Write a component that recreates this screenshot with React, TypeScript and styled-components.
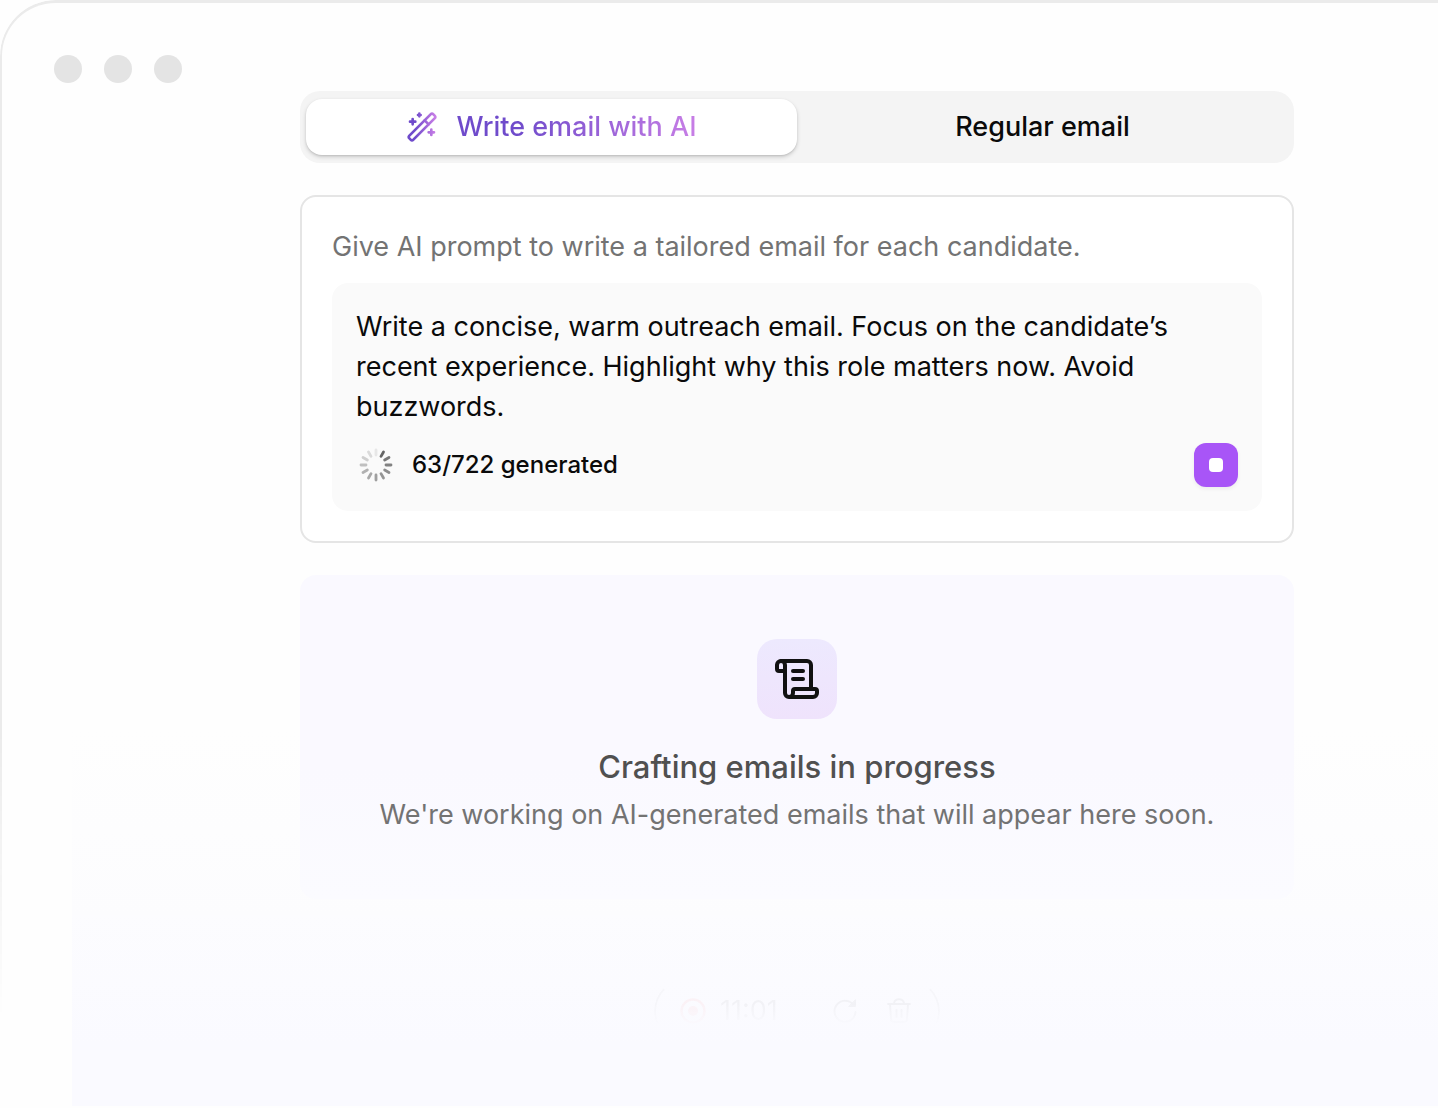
import React, { useState } from "react";
import styled, { createGlobalStyle } from "styled-components";
import { ScrollText } from "lucide-react";

const GlobalStyle = createGlobalStyle`
  *, *::before, *::after { box-sizing: border-box; }
  body {
    margin: 0;
    background: #fefefe;
    color: #0a0a0a;
    font-family: Inter, "Liberation Sans", Arial, sans-serif;
  }
  button, textarea { font: inherit; color: inherit; }
`;

const Window = styled.div`
  position: relative;
  isolation: isolate;
  min-height: 100vh;
  overflow: hidden;

  &::before {
    content: "";
    position: absolute;
    inset: 0;
    border-top: 3px solid #ebebeb;
    border-left: 2px solid #ebebeb;
    border-top-left-radius: 56px;
    mask-image: linear-gradient(#000 66%, transparent 92%);
    pointer-events: none;
  }
`;

const TitleBar = styled.header`
  display: flex;
  gap: 22px;
  padding: 55px 54px 8px;
`;

const Dot = styled.span`
  width: 28px;
  height: 28px;
  border-radius: 50%;
  background: #e4e4e4;
`;

const Content = styled.main`
  display: flex;
  flex-direction: column;
  gap: 32px;
  padding: 0 144px 0 300px;
`;

const Tabs = styled.div`
  display: grid;
  grid-template-columns: 1fr 1fr;
  padding: 8px 6px;
  border-radius: 20px;
  background: #f4f4f4;
`;

const Tab = styled.button<{ $active: boolean }>`
  display: flex;
  align-items: center;
  justify-content: center;
  gap: 18px;
  height: 56px;
  padding: 0;
  border: 0;
  border-radius: 16px;
  background: ${(p) => (p.$active ? "#fff" : "transparent")};
  box-shadow: ${(p) =>
    p.$active ? "0 2px 4px rgba(0,0,0,.16), 0 1px 2px rgba(0,0,0,.1)" : "none"};
  font-size: 27px;
  font-weight: 500;
  line-height: 40px;
  cursor: pointer;
`;

const GradientText = styled.span`
  background: linear-gradient(90deg, #6f4bcb 25%, #c87ee6);
  background-clip: text;
  color: transparent;
`;

const PromptCard = styled.section`
  display: flex;
  flex-direction: column;
  gap: 16px;
  padding: 30px;
  border: 2px solid #e5e5e5;
  border-radius: 16px;
  background: #fff;
`;

const PromptLabel = styled.label`
  color: #737373;
  font-size: 27px;
  line-height: 40px;
`;

const PromptBox = styled.div`
  display: flex;
  flex-direction: column;
  gap: 16px;
  padding: 24px;
  border-radius: 16px;
  background: #fafafa;
`;

const PromptInput = styled.textarea`
  display: block;
  width: 100%;
  padding: 0;
  border: 0;
  outline: 0;
  overflow: hidden;
  resize: none;
  background: transparent;
  font-size: 27px;
  line-height: 40px;
`;

const StatusRow = styled.div`
  display: flex;
  align-items: center;
  justify-content: space-between;
`;

const Status = styled.div`
  display: flex;
  align-items: center;
  gap: 16px;
  font-size: 24px;
  font-weight: 500;
  line-height: 32px;
`;

const StopButton = styled.button`
  display: grid;
  place-items: center;
  width: 44px;
  height: 44px;
  padding: 0;
  border: 0;
  border-radius: 12px;
  background: #a855f7;
  box-shadow: 0 2px 4px rgba(0, 0, 0, 0.06);
  cursor: pointer;

  &::before {
    content: "";
    width: 14px;
    height: 14px;
    border-radius: 4px;
    background: #fff;
  }
`;

const ProgressPanel = styled.section`
  display: flex;
  flex-direction: column;
  align-items: center;
  padding: 64px 32px;
  border-radius: 16px;
  background: linear-gradient(#faf9ff 60%, #fbfbff);
  text-align: center;
`;

const IconTile = styled.div`
  display: grid;
  place-items: center;
  width: 80px;
  height: 80px;
  margin-bottom: 24px;
  border-radius: 20px;
  background: linear-gradient(#ede9fe, #efe3fc);
  color: #111;
`;

const PanelTitle = styled.h2`
  margin: 0 0 4px;
  color: #505050;
  font-size: 31px;
  font-weight: 500;
  line-height: 48px;
`;

const PanelText = styled.p`
  margin: 0;
  color: #737373;
  font-size: 27px;
  line-height: 40px;
`;

const Recorder = styled.div`
  display: flex;
  align-items: center;
  align-self: center;
  width: 286px;
  height: 64px;
  margin-top: 48px;
  padding: 0 26px 0 24px;
  border: 2px solid rgba(0, 0, 0, 0.6);
  border-top-color: transparent;
  border-bottom-color: transparent;
  border-radius: 32px;
  opacity: 0.03;
  mask-image: linear-gradient(#000 40%, transparent 76%);
`;

const RecordTime = styled.time`
  flex: 1;
  margin-left: 14px;
  font-size: 27px;
  line-height: 40px;
`;

const RecorderActions = styled.div`
  display: flex;
  gap: 28px;
`;

const RecorderButton = styled.button`
  display: grid;
  place-items: center;
  padding: 0;
  border: 0;
  background: none;
`;

const BottomFade = styled.div`
  position: absolute;
  z-index: -1;
  inset: 66% 0 2px 72px;
  background: linear-gradient(rgba(250, 250, 255, 0), rgba(250, 250, 255, 0.4) 42%, #fafaff 84%);
  pointer-events: none;
`;

function WandIcon() {
  return (
    <svg
      width="32"
      height="32"
      viewBox="0 0 24 24"
      fill="none"
      stroke="url(#wand)"
      strokeWidth="2"
      strokeLinecap="round"
      strokeLinejoin="round"
      aria-hidden="true"
    >
      <defs>
        <linearGradient id="wand" gradientUnits="userSpaceOnUse" x1="2" y1="0" x2="22" y2="0">
          <stop offset="0.25" stopColor="#6f4bcb" />
          <stop offset="1" stopColor="#c87ee6" />
        </linearGradient>
      </defs>
      <path d="m21.64 3.64-1.28-1.28a1.21 1.21 0 0 0-1.72 0L2.36 18.64a1.21 1.21 0 0 0 0 1.72l1.28 1.28a1.2 1.2 0 0 0 1.72 0L21.64 5.36a1.2 1.2 0 0 0 0-1.72" />
      <path d="m14 7 3 3M5 6v4M19 14v4M10 2v2M7 8H3M21 16h-4M11 3H9" />
    </svg>
  );
}

const SPOKES = [0.08, 0.62, 0.54, 0.5, 0.45, 0.42, 0.38, 0.34, 0.3, 0.24, 0.18, 0.13];

function Spinner() {
  return (
    <svg width="40" height="40" viewBox="0 0 40 40" aria-hidden="true">
      {SPOKES.map((opacity, i) => (
        <line
          key={i}
          x1="20"
          y1="5"
          x2="20"
          y2="10"
          stroke="#0a0a0a"
          strokeWidth="2.8"
          strokeLinecap="round"
          strokeOpacity={opacity}
          transform={`rotate(${i * 30} 20 20)`}
        />
      ))}
    </svg>
  );
}

function RecordIcon() {
  return (
    <svg width="26" height="26" viewBox="0 0 26 26" aria-hidden="true">
      <circle cx="13" cy="13" r="11.5" fill="none" stroke="#f00" strokeWidth="2.5" />
      <circle cx="13" cy="13" r="5" fill="#f00" />
    </svg>
  );
}

function RestartIcon() {
  return (
    <svg
      width="26"
      height="26"
      viewBox="0 0 26 26"
      fill="none"
      stroke="#000"
      strokeWidth="2"
      strokeLinecap="round"
      aria-hidden="true"
    >
      <path d="M23.5 14A10.5 10.5 0 1 1 21 6.5" />
      <path d="M23.5 2v6.5H17z" fill="#000" strokeLinejoin="round" strokeWidth="1" />
    </svg>
  );
}

function TrashIcon() {
  return (
    <svg
      width="26"
      height="26"
      viewBox="0 0 26 26"
      fill="none"
      stroke="#000"
      strokeWidth="2"
      strokeLinecap="round"
      strokeLinejoin="round"
      aria-hidden="true"
    >
      <path d="M2 6h22M8 5c1-5 9-5 10 0M4 6l1 15a3 3 0 0 0 3 3h10a3 3 0 0 0 3-3l1-15M10.5 12v7M15.5 12v7" />
    </svg>
  );
}

export default function App() {
  const [tab, setTab] = useState("ai");
  const [prompt, setPrompt] = useState(
    "Write a concise, warm outreach email. Focus on the candidate’s recent experience. Highlight why this role matters now. Avoid buzzwords."
  );

  return (
    <>
      <GlobalStyle />
      <Window>
        <TitleBar>
          <Dot />
          <Dot />
          <Dot />
        </TitleBar>
        <Content>
          <Tabs role="tablist">
            <Tab role="tab" aria-selected={tab === "ai"} $active={tab === "ai"} onClick={() => setTab("ai")}>
              <WandIcon />
              <GradientText>Write email with AI</GradientText>
            </Tab>
            <Tab
              role="tab"
              aria-selected={tab === "regular"}
              $active={tab === "regular"}
              onClick={() => setTab("regular")}
            >
              Regular email
            </Tab>
          </Tabs>

          <PromptCard>
            <PromptLabel htmlFor="prompt">
              Give AI prompt to write a tailored email for each candidate.
            </PromptLabel>
            <PromptBox>
              <PromptInput
                id="prompt"
                rows={3}
                spellCheck={false}
                value={prompt}
                onChange={(e) => setPrompt(e.target.value)}
              />
              <StatusRow>
                <Status role="status">
                  <Spinner />
                  63/722 generated
                </Status>
                <StopButton aria-label="Stop" />
              </StatusRow>
            </PromptBox>
          </PromptCard>

          <ProgressPanel>
            <IconTile>
              <ScrollText size={48} strokeWidth={2} />
            </IconTile>
            <PanelTitle>Crafting emails in progress</PanelTitle>
            <PanelText>We're working on AI-generated emails that will appear here soon.</PanelText>
          </ProgressPanel>

          <Recorder>
            <RecordIcon />
            <RecordTime>11:01</RecordTime>
            <RecorderActions>
              <RecorderButton aria-label="Restart">
                <RestartIcon />
              </RecorderButton>
              <RecorderButton aria-label="Delete">
                <TrashIcon />
              </RecorderButton>
            </RecorderActions>
          </Recorder>
        </Content>
        <BottomFade />
      </Window>
    </>
  );
}
